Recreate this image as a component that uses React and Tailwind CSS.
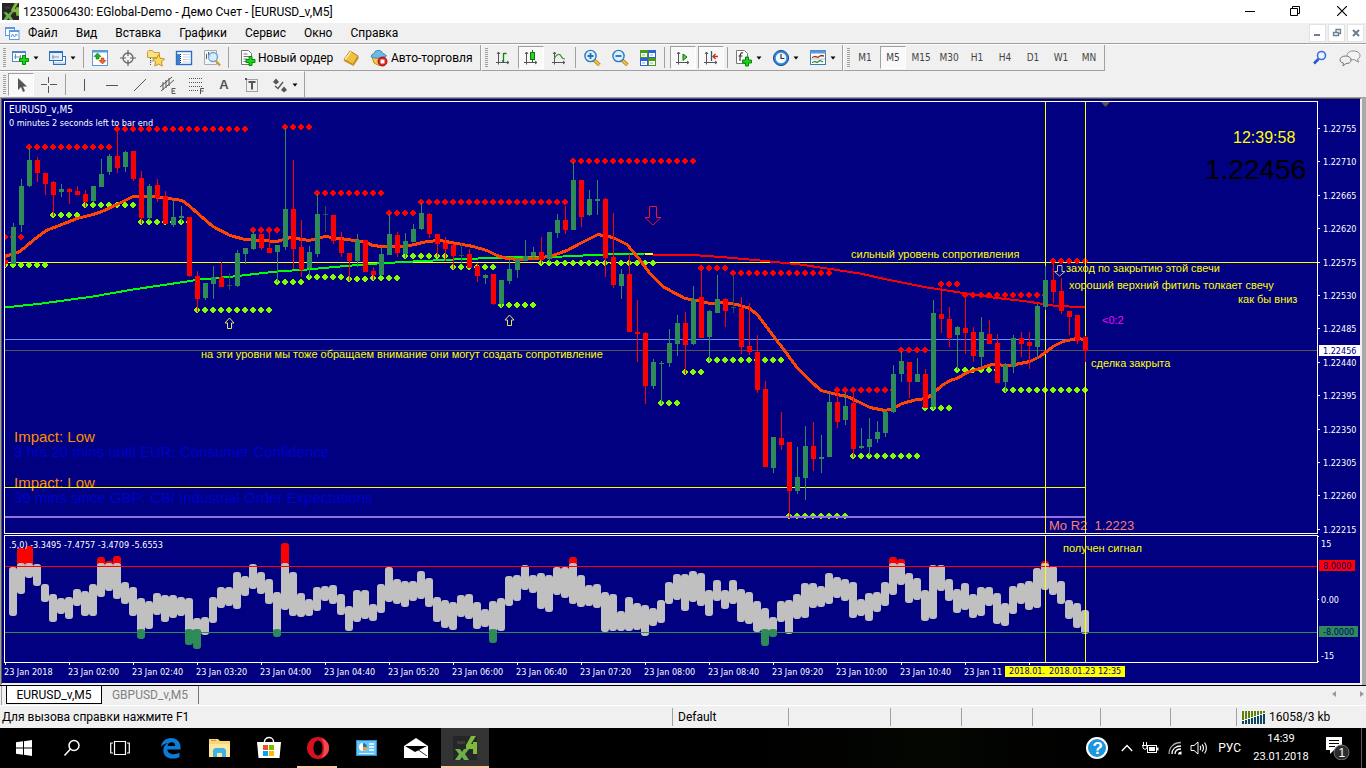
import React from "react";

const UI = "font-['Roboto','Noto_Sans',sans-serif]";
const TAHOMA = "font-['DejaVu_Sans_Condensed','DejaVu_Sans',sans-serif]";

/* high, body top, body bottom, low; one entry every 8px */
const CANDLES = [
  [5, "r", 254, 260, 264, 267], [13, "g", 223, 227, 264, 264], [21, "g", 179, 186, 225, 232], [29, "g", 148, 160, 186, 187],
  [37, "r", 157, 160, 173, 182], [45, "r", 173, 173, 184, 195], [53, "r", 181, 182, 195, 216], [61, "g", 184, 189, 192, 197],
  [69, "r", 188, 189, 192, 204], [77, "r", 186, 191, 195, 195], [85, "r", 190, 194, 202, 207], [93, "g", 186, 186, 201, 202],
  [101, "g", 159, 174, 187, 187], [109, "g", 154, 156, 172, 175], [117, "r", 130, 156, 168, 173], [125, "g", 151, 152, 167, 172],
  [133, "r", 151, 151, 179, 181], [141, "r", 171, 178, 218, 224], [149, "g", 184, 186, 218, 221], [157, "r", 179, 185, 198, 202],
  [165, "r", 191, 196, 224, 224], [173, "g", 200, 217, 225, 227], [181, "g", 206, 216, 218, 223], [189, "r", 217, 217, 276, 277],
  [197, "r", 271, 276, 299, 312], [205, "g", 283, 283, 298, 300], [213, "g", 266, 277, 284, 299], [221, "r", 262, 277, 287, 287],
  [229, "d", 273, 285, 286, 290], [237, "g", 250, 253, 286, 287], [245, "g", 248, 248, 254, 264], [253, "g", 231, 234, 249, 250],
  [261, "r", 234, 234, 248, 250], [269, "r", 232, 248, 253, 253], [277, "g", 245, 245, 252, 282], [285, "g", 128, 209, 247, 250],
  [293, "r", 160, 209, 249, 269], [301, "r", 220, 247, 270, 277], [309, "g", 246, 252, 268, 277], [317, "g", 194, 214, 254, 257],
  [325, "d", 206, 214, 215, 232], [333, "r", 215, 215, 241, 244], [341, "r", 232, 240, 253, 257], [349, "r", 253, 253, 261, 281],
  [357, "g", 234, 240, 261, 267], [365, "r", 240, 240, 272, 272], [373, "r", 267, 271, 275, 280], [381, "g", 248, 254, 275, 276],
  [389, "g", 214, 234, 255, 255], [397, "r", 232, 235, 253, 257], [405, "g", 233, 241, 254, 258], [413, "g", 224, 229, 242, 242],
  [421, "g", 203, 213, 229, 230], [429, "r", 213, 214, 234, 238], [437, "r", 234, 234, 244, 257], [445, "r", 237, 243, 249, 261],
  [453, "r", 244, 245, 256, 269], [461, "d", 244, 255, 256, 264], [469, "r", 249, 254, 268, 268], [477, "r", 263, 266, 276, 282],
  [485, "g", 274, 275, 278, 284], [493, "r", 274, 274, 304, 305], [501, "g", 280, 280, 304, 307], [509, "g", 260, 269, 281, 284],
  [517, "g", 259, 259, 270, 278], [525, "g", 240, 256, 261, 261], [533, "g", 247, 252, 256, 259], [541, "r", 237, 252, 260, 264],
  [549, "g", 232, 232, 259, 262], [557, "g", 214, 220, 233, 238], [565, "r", 206, 220, 230, 234], [573, "g", 162, 180, 230, 230],
  [581, "r", 180, 180, 217, 227], [589, "g", 190, 199, 215, 216], [597, "g", 180, 199, 201, 215], [605, "r", 198, 199, 258, 277],
  [613, "r", 213, 257, 285, 288], [621, "g", 269, 274, 286, 299], [629, "r", 254, 274, 332, 332], [637, "r", 300, 332, 334, 362],
  [645, "r", 332, 333, 386, 404], [653, "g", 359, 362, 386, 389], [661, "g", 361, 363, 364, 404], [669, "g", 329, 343, 363, 367],
  [677, "g", 315, 323, 344, 356], [685, "r", 312, 323, 345, 374], [693, "g", 286, 299, 344, 345], [701, "r", 270, 297, 338, 338],
  [709, "g", 310, 311, 337, 361], [717, "g", 275, 299, 313, 313], [725, "r", 298, 299, 311, 327], [733, "d", 275, 307, 308, 313],
  [741, "r", 297, 308, 347, 354], [749, "r", 303, 346, 352, 355], [757, "r", 335, 352, 390, 393], [765, "r", 381, 389, 467, 467],
  [773, "g", 437, 437, 468, 473], [781, "r", 412, 438, 445, 450], [789, "r", 442, 442, 491, 518], [797, "g", 447, 477, 491, 494],
  [805, "g", 426, 446, 478, 500], [813, "r", 422, 446, 459, 471], [821, "g", 435, 457, 459, 473], [829, "g", 392, 402, 457, 457],
  [837, "r", 391, 402, 422, 428], [845, "g", 392, 406, 420, 425], [853, "r", 391, 403, 449, 457], [861, "g", 428, 446, 448, 449],
  [869, "g", 418, 439, 447, 456], [877, "g", 421, 432, 439, 443], [885, "g", 409, 412, 433, 437], [893, "g", 365, 374, 412, 413],
  [901, "g", 351, 361, 374, 382], [909, "r", 362, 362, 382, 398], [917, "g", 358, 374, 382, 382], [925, "r", 369, 374, 408, 408],
  [933, "g", 300, 313, 407, 409], [941, "r", 285, 314, 319, 333], [949, "r", 307, 319, 338, 347], [957, "g", 326, 327, 335, 370],
  [965, "r", 296, 328, 333, 354], [973, "r", 327, 332, 356, 362], [981, "g", 317, 332, 357, 367], [989, "r", 320, 334, 344, 344],
  [997, "r", 334, 343, 383, 383], [1005, "g", 363, 365, 382, 392], [1013, "g", 335, 338, 367, 373], [1021, "r", 332, 338, 344, 357],
  [1029, "r", 332, 342, 346, 369], [1037, "g", 304, 306, 347, 359], [1045, "g", 266, 280, 307, 310], [1053, "r", 261, 280, 292, 303],
  [1061, "r", 278, 291, 311, 314], [1069, "r", 311, 311, 317, 335], [1077, "r", 315, 315, 341, 344], [1085, "r", 336, 337, 351, 362],
];
const CANDLE_COLOR = { r: "#ff0000", g: "#2e8b57", d: "#2f4f4f" };

const RED_DOTS = [
  [5, 21, 237], [29, 109, 147], [117, 245, 129], [253, 277, 230], [285, 309, 127], [317, 381, 193], [389, 413, 213], [421, 565, 202],
  [573, 693, 161], [701, 725, 268], [733, 829, 273], [837, 893, 390], [901, 925, 350], [941, 957, 284], [965, 1045, 295], [1053, 1085, 261],
];
const GREEN_DOTS = [
  [5, 45, 265], [53, 77, 215], [85, 133, 205], [141, 189, 222], [197, 269, 310], [277, 301, 282], [309, 341, 277], [349, 365, 279],
  [373, 397, 278], [405, 445, 256], [453, 493, 267], [501, 533, 305], [541, 653, 263], [661, 677, 403], [685, 701, 372], [709, 781, 360],
  [789, 845, 516], [853, 917, 456], [925, 949, 408], [957, 997, 370], [1005, 1085, 390],
];

const FAST_MA =
  "5,256 20,251 33,240 46,230 62,224 77,218 93,214 102,211 117,204 133,196 150,196 162,197 182,200 189,205 200,215 213,226 230,235 245,239 263,240 277,241 290,237 309,240 325,236 340,238 347,239 363,241 373,245 382,246 397,246 410,245 427,241 440,240 457,243 473,246 487,250 497,255 507,258 520,259 537,258 553,255 567,250 580,243 598,234 613,237 627,244 638,257 650,273 663,286 670,290 685,298 697,300 710,303 720,302 737,304 750,308 758,315 773,335 783,348 797,367 810,380 821,390 837,394 847,396 860,402 870,407 885,410 893,408 902,403 917,399 927,398 933,393 942,385 950,380 957,378 967,372 983,367 992,364 1010,365 1030,361 1040,356 1053,346 1063,341 1077,338 1085,339";
const SLOW_UP =
  "5,307 42,303 93,296 133,289 167,284 200,279 233,276 277,271 307,269 340,266 377,263 413,261 453,259 503,257 563,256 603,254 645,253";
const SLOW_DOWN =
  "653,254 687,254 727,257 760,260 800,264 827,268 860,273 887,279 927,287 960,292 993,297 1027,301 1053,305 1085,307";

/* top and bottom of each oscillator bar, one every 8px from x=13 */
const BARS = [
  [567, 616], [548, 594], [546, 578], [564, 586], [584, 602], [594, 622], [598, 614], [597, 619], [589, 606], [591, 616], [584, 616],
  [557, 597], [561, 591], [556, 599], [582, 604], [587, 616], [598, 639], [601, 629], [593, 615], [595, 622], [595, 618], [597, 616],
  [598, 645], [618, 649], [617, 635], [597, 623], [587, 608], [587, 606], [572, 609], [576, 596], [564, 589], [572, 594], [579, 604],
  [592, 637], [543, 610], [572, 616], [593, 617], [599, 616], [587, 611], [586, 601], [585, 604], [594, 615], [606, 631], [590, 622],
  [590, 619], [604, 621], [584, 613], [567, 602], [579, 604], [581, 607], [581, 601], [571, 599], [578, 607], [597, 622], [600, 628],
  [602, 630], [595, 617], [594, 619], [602, 629], [609, 627], [601, 643], [598, 631], [576, 606], [575, 601], [565, 590], [575, 593],
  [573, 609], [575, 612], [567, 595], [567, 598], [557, 604], [575, 607], [585, 606], [584, 608], [592, 632], [594, 631], [611, 631],
  [597, 631], [603, 630], [605, 636], [608, 626], [600, 623], [582, 604], [574, 600], [574, 611], [571, 602], [573, 606], [590, 616],
  [580, 601], [590, 609], [580, 604], [589, 622], [592, 624], [601, 632], [608, 646], [617, 637], [601, 622], [600, 634], [594, 619],
  [583, 618], [583, 608], [586, 607], [573, 604], [577, 598], [579, 601], [582, 618], [599, 616], [593, 621], [592, 612], [582, 606],
  [557, 595], [559, 585], [573, 603], [578, 600], [590, 621], [565, 619], [565, 591], [579, 601], [589, 613], [583, 610], [594, 618],
  [587, 616], [587, 606], [593, 624], [603, 626], [586, 614], [583, 604], [581, 610], [568, 608], [561, 590], [566, 595], [581, 604],
  [600, 619], [603, 628], [610, 634],
];

const PRICES = ["1.22755", "1.22710", "1.22665", "1.22620", "1.22575", "1.22530", "1.22485", "1.22440", "1.22395", "1.22350", "1.22305", "1.22260", "1.22215"];
const TIMES = ["2018", "02:00", "02:40", "03:20", "04:00", "04:40", "05:20", "06:00", "06:40", "07:20", "08:00", "08:40", "09:20", "10:00", "10:40", "11"];

function Dots({ rows, color }) {
  return rows.flatMap(([a, b, y]) => {
    const out = [];
    for (let x = a; x <= b; x += 8)
      out.push(
        <path
          key={x + "-" + y}
          d={`M${x - 1} ${y - 3}h2v1h1v1h1v2h-1v1h-1v1h-2v-1h-1v-1h-1v-2h1v-1h1z`}
          fill={color}
          shapeRendering="crispEdges"
        />
      );
    return out;
  });
}

function Note({ x, y, children, color = "#ffff00", size = 11 }) {
  return (
    <text x={x} y={y} fill={color} fontSize={size} fontFamily="Liberation Sans, Arial, sans-serif">
      {children}
    </text>
  );
}

function PricePlot() {
  return (
    <svg className="block h-full w-full" role="img" aria-label="EURUSD_v,M5">
      <g transform="translate(-5 -102)">
        <g shapeRendering="crispEdges">
          <rect x="5" y="262" width="100%" height="1" fill="#ffff00" />
          <rect x="5" y="339" width="1080" height="1" fill="#6495ed" />
          <rect x="5" y="350" width="100%" height="1" fill="#555555" />
        </g>
        <Note x={14} y={442} size={15} color="#ff8c00">Impact: Low</Note>
        <Note x={14} y={457} size={15} color="#0000cd">3 hrs 20 mins until EUR: Consumer Confidence</Note>
        <Note x={14} y={488} size={15} color="#ff8c00">Impact: Low</Note>
        <Note x={14} y={503} size={15} color="#0000cd">39 mins since GBP: CBI Industrial Order Expectations</Note>
        <Note x={1233} y={143} size={16}>12:39:58</Note>
        <Note x={1205} y={179} size={28} color="#000000">1.22456</Note>
        <Note x={1049} y={530} size={13} color="#fa8072">{"Mo R2\u00a0 1.2223"}</Note>
        <Dots rows={RED_DOTS} color="#ff0000" />
        <Dots rows={GREEN_DOTS} color="#7fff00" />
        <g shapeRendering="crispEdges">
          <rect x="5" y="487" width="1080" height="1" fill="#ffff00" />
          <rect x="5" y="516" width="1080" height="2" fill="#9370db" />
          <rect x="1045" y="102" width="1" height="100%" fill="#ffff00" />
          <rect x="1085" y="102" width="1" height="100%" fill="#ffff00" />
          <g fill="none" transform="translate(0 0.5)">
            <polyline points={SLOW_UP} stroke="#00ff00" strokeWidth="2" />
            <polyline points="645,253 653,253" stroke="#ffff00" strokeWidth="2" />
            <polyline points={SLOW_DOWN} stroke="#ff0000" strokeWidth="2" />
            <polyline points={FAST_MA} stroke="#ff4500" strokeWidth="3" />
          </g>
          {CANDLES.map(([x, c, hi, top, bot, lo]) => (
            <g key={x} fill={CANDLE_COLOR[c]}>
              <rect x={x} y={hi} width="1" height={lo - hi} />
              <rect x={x - 2} y={top} width="5" height={Math.max(1, bot - top)} />
            </g>
          ))}
        </g>
        <path d="M1101 102h9l-4.500 5z" fill="#555" />
        <g fill="none">
          <path d="M229.500 318l4.500 5h-2.500v5.500h-4v-5.500H225z" stroke="#e6e65a" />
          <path d="M509.500 315l4.500 5h-2.500v5.500h-4v-5.500H505z" stroke="#e6e65a" />
          <path d="M649.500 206.500h7v11h4.500l-8 7.500l-8-7.500h4.500z" stroke="#ee1133" />
          <path d="M1057.500 265.500h4.500v6h3l-5.500 4.500l-5-4.500h3z" stroke="#c8c08c" />
        </g>
        <Note x={851} y={258}>сильный уровень сопротивления</Note>
        <Note x={1066} y={272}>заход по закрытию этой свечи</Note>
        <Note x={1069} y={289}>хороший верхний фитиль толкает свечу</Note>
        <Note x={1238} y={303}>как бы вниз</Note>
        <Note x={1091} y={367}>сделка закрыта</Note>
        <Note x={201} y={358}>на эти уровни мы тоже обращаем внимание они могут создать сопротивление</Note>
        <Note x={1102} y={324} color="#ff00ff">&lt;0:2</Note>
        <g fill="#ffffff" className={TAHOMA}>
          <text x="9" y="113" fontSize="10">EURUSD_v,M5</text>
          <text x="9" y="126" fontSize="9">0 minutes 2 seconds left to bar end</text>
        </g>
      </g>
    </svg>
  );
}

function Oscillator() {
  return (
    <svg className="block h-full w-full" role="img" aria-label="Oscillator">
      <g transform="translate(-5 -536)">
        {BARS.map(([t, b], i) => {
          const x = 9 + i * 8;
          const over = t <= 561;
          const under = b >= 637;
          const top = over ? 563 : t;
          const bottom = under ? 632 : b;
          return (
            <g key={i}>
              {over && <rect x={x} y={t} width="8" height={576 - t} rx="3" fill="#ff0000" />}
              <rect x={x} y={top} width="8" height={bottom - top} rx="3" fill="#c0c0c0" />
              {under && <rect x={x} y="629" width="8" height={b - 629} rx="3" fill="#2e8b57" />}
            </g>
          );
        })}
        <g shapeRendering="crispEdges">
          <rect x="5" y="566" width="100%" height="1" fill="#ff0000" />
          <rect x="5" y="632" width="100%" height="1" fill="#2e8b57" />
          <rect x="1045" y="536" width="1" height="100%" fill="#ffff00" />
          <rect x="1085" y="536" width="1" height="100%" fill="#ffff00" />
        </g>
        <text x="9" y="548" fill="#fff" className={TAHOMA} fontSize="9">.5,0) -3.3495 -7.4757 -3.4709 -5.6553</text>
        <Note x={1063} y={552}>получен сигнал</Note>
      </g>
    </svg>
  );
}

function PriceAxis() {
  return (
    <svg className={`block h-full w-[42px] shrink-0 ${TAHOMA}`} fontSize="9" fill="#fff">
      <g transform="translate(-1318 -101)">
        {PRICES.map((p, i) => {
          const y = Math.round(128 + i * 33.4);
          return (
            <g key={p}>
              <rect x="1318" y={y} width="2" height="1" />
              <text x="1323" y={y + 4}>{p}</text>
            </g>
          );
        })}
        <rect x="1319" y="345" width="41" height="11" />
        <text x="1323" y="354" fill="#000080">1.22456</text>
      </g>
    </svg>
  );
}

function OscAxis() {
  return (
    <svg className={`block h-full w-[42px] shrink-0 ${TAHOMA}`} fontSize="9" fill="#fff">
      <g transform="translate(-1318 -535)">
        <rect x="1318" y="536" width="1" height="1" />
        <rect x="1318" y="599" width="1" height="1" />
        <rect x="1318" y="661" width="1" height="1" />
        <text x="1321" y="547">15</text>
        <text x="1321" y="603">0.00</text>
        <text x="1321" y="659">-15</text>
        <rect x="1319" y="560" width="36" height="11" fill="#ff0000" />
        <text x="1323" y="569" fill="#000080">8.0000</text>
        <rect x="1319" y="626" width="39" height="11" fill="#2e8b57" />
        <text x="1323" y="635" fill="#000080">-8.0000</text>
      </g>
    </svg>
  );
}

/* ---------- toolbar icons ---------- */
const Svg = ({ w = 18, h = 18, children, ...p }) => (
  <svg width={w} height={h} viewBox={`0 0 ${w} ${h}`} fill="none" className="block shrink-0" aria-hidden="true" {...p}>
    {children}
  </svg>
);
const Plus = ({ x, y }) => (
  <path transform={`translate(${x} ${y})`} d="M3.500 .5h3v3h3v3h-3v3h-3v-3h-3v-3h3z" fill="#19d419" stroke="#078a07" />
);
const Axes = ({ children }) => (
  <Svg>
    <path d="M4.500 3v12.500M2 13.500h13M3 5l1.500-2L6 5M13 12l2 1.500L13 15" stroke="#555" />
    {children}
  </Svg>
);
const NewChart = () => (
  <Svg><rect x=".5" y="2.500" width="13" height="10" fill="#fff" stroke="#4a86c8" /><path d="M1 3.500h12" stroke="#4a86c8" /><path d="M3.500 5v5M2 8h7M8.500 6v3" stroke="#6a8db0" /><Plus x={7} y={6} /></Svg>
);
const Profiles = () => (
  <Svg><rect x="4.500" y="7.500" width="12" height="8" fill="#fff" stroke="#2f6fc0" /><path d="M5 14h11" stroke="#8ab4e8" /><rect x=".5" y="2.500" width="13" height="9" fill="#e4effb" stroke="#2f6fc0" /><path d="M1 3.500h12" stroke="#2f6fc0" /><path d="M3 8h7M4 6v4" stroke="#8099b3" /></Svg>
);
const Market = () => (
  <Svg><rect x="1.500" y="1.500" width="15" height="15" fill="#fff" stroke="#5a9bd8" /><path d="M1 2.500h16" stroke="#5a9bd8" strokeWidth="2" /><path d="M6.500 4L10 7.500H8V10H5V7.500H3z" fill="#21b021" stroke="#0c7a0c" strokeWidth=".6" /><path d="M11.500 15L8 11.500h2V9h3v2.500h2z" fill="#f0642a" stroke="#b83c10" strokeWidth=".6" /></Svg>
);
const Target = () => (
  <Svg><circle cx="9" cy="9" r="5" stroke="#666" strokeWidth="1.300" /><path d="M9 1v6M9 11v6M1 9h6M11 9h6" stroke="#666" strokeWidth="1.200" /></Svg>
);
const FolderStar = () => (
  <Svg><path d="M.5 2.500l1-1h4l1.500 2h5.500v5h-12z" fill="#fbe08a" stroke="#c9a13a" /><path d="M3.500 9v7M3.500 12h4" stroke="#555" strokeDasharray="1 1" /><path d="M11.500 5.500l1.900 3.800 4.100.6-3 3 .8 4.200-3.800-2-3.700 2 .7-4.200-3-3 4.200-.6z" fill="#ffd757" stroke="#b98a18" strokeWidth=".9" /></Svg>
);
const ListIcon = () => (
  <Svg><rect x="1.500" y="2.500" width="15" height="13" fill="#fff" stroke="#2a6fc4" strokeWidth="1.400" /><path d="M2 5h3v10H2z" fill="#3a7fd4" /><path d="M8 5.500h7M8 8h7M8 10.500h7M8 13h7" stroke="#c8d4e4" /><path d="M5.500 5v9" stroke="#222" strokeDasharray="1 1" /></Svg>
);
const Tester = () => (
  <Svg><path d="M1.500 1.500h12v14h-12z" fill="#f4f4f4" stroke="#aaa" /><path d="M3.500 5v5M5.500 3v4M7.500 5v3" stroke="#467" /><circle cx="10" cy="8" r="4.500" fill="#d7ecfb" fillOpacity=".85" stroke="#6aa4d4" strokeWidth="1.300" /><path d="M13 12l4 4.500" stroke="#d79b2a" strokeWidth="2.400" /></Svg>
);
const Order = () => (
  <Svg w={16}><path d="M1.500 1.500h7l3 3v11h-10z" fill="#fff" stroke="#777" /><path d="M3.500 5h4M3.500 7.500h6M3.500 10h4M3.500 12.500h3" stroke="#777" /><Plus x={5.500} y={7} /></Svg>
);
const Book = () => (
  <Svg><path d="M2 10.500L8 2l8 5-5 8.500z" fill="#f3bf3d" stroke="#b07a14" /><path d="M2 10.500l9 5 5-8.500.8 2L11.500 17 2 12z" fill="#c98f25" /><path d="M3 10.500l6-8" stroke="#fff0b0" strokeWidth="1.400" /></Svg>
);
const Auto = () => (
  <Svg><path d="M2 8h13l-1.500 6.500L9 16.500 4 14z" fill="#f6c94a" stroke="#c08d1c" /><path d="M1 7.500C2 4 5 5 5 2.500 7 1 11 1 12 3c0 2 4 2 4.500 4C12 9.500 4 10 1 7.500z" fill="#6fb9e6" stroke="#2f83bd" strokeWidth=".9" /><circle cx="12.500" cy="12.500" r="4.500" fill="#d22" stroke="#a11" /><rect x="10.500" y="10.500" width="4" height="4" fill="#fff" /></Svg>
);
const Zoom = ({ plus }) => (
  <Svg><path d="M11 11l5.500 5" stroke="#a97a12" strokeWidth="3.600" /><path d="M11 11l5.500 5" stroke="#f0c63a" strokeWidth="2" /><circle cx="7.500" cy="7" r="5.600" fill="#d9effc" stroke="#2f78bd" strokeWidth="1.400" /><path d={plus ? "M4.500 7h6M7.500 4v6" : "M4.500 7h6"} stroke="#2f6ea6" strokeWidth="1.800" /></Svg>
);
const Tile = () => (
  <Svg><rect x="1" y="1" width="8" height="8" fill="#4a9a18" /><rect x="9" y="1" width="8" height="8" fill="#2c64d8" /><rect x="1" y="9" width="8" height="8" fill="#2c64d8" /><rect x="9" y="9" width="8" height="8" fill="#4a9a18" /><path d="M2 4h6v4H2zM10 4h6v4h-6zM2 12h6v4H2zM10 12h6v4h-6z" fill="#fff" /><path d="M3 6h3M11 6h3M3 14h3M11 14h3" stroke="#88a8d8" /></Svg>
);
const IndAdd = () => (
  <Svg><path d="M1.500 1.500h8l3 3v10h-11z" fill="#fff" stroke="#777" /><path d="M8 4c-3-1-3 2-3 8M3.500 7h4" stroke="#333" strokeWidth="1.200" /><Plus x={7} y={7.500} /></Svg>
);
const Clock = () => (
  <Svg><circle cx="9" cy="9" r="7.600" fill="#2f86e0" stroke="#15508f" /><circle cx="9" cy="9" r="5.300" fill="#f3f8fd" /><path d="M9 5v4.500h3.500" stroke="#333" strokeWidth="1.200" /></Svg>
);
const Template = () => (
  <Svg><rect x="1.500" y="1.500" width="15" height="14" fill="#fff" stroke="#3c78b8" /><path d="M1 3h16" stroke="#5a98d8" strokeWidth="3" /><path d="M3 8.500l3-1 3 .8 3-1.800 3 .5" stroke="#a03018" strokeWidth="1.300" /><path d="M2 10h14" stroke="#bbb" /><path d="M3 13.500l3-1 2 1 3-2 3 1.500" stroke="#2e8b2e" strokeWidth="1.300" /></Svg>
);
const Caret = () => <Svg w={6} h={4}><path d="M.5 .5h5L3 3.500z" fill="#000" /></Svg>;

function Tool({ label, pressed, children }) {
  return (
    <button
      type="button"
      aria-label={label}
      aria-pressed={pressed ? "true" : undefined}
      className={`mr-[2px] flex h-[23px] w-[26px] shrink-0 items-center justify-center border ${pressed ? "border-t-[#a0a0a0] border-r-white border-b-white border-l-[#a0a0a0] bg-[#f9f9f9]" : "border-transparent"}`}
    >
      {children}
    </button>
  );
}
function DropTool({ label, children }) {
  return (
    <button type="button" aria-label={label} className="flex h-[23px] w-[37px] shrink-0 items-center gap-[3px] pl-[4px]">
      {children}
      <Caret />
    </button>
  );
}
const Grip = () => (
  <div className="flex w-2 shrink-0 justify-center">
    <div className="h-[20px] w-[3px] bg-[repeating-linear-gradient(to_bottom,#a0a0a0_0_1px,#f0f0f0_1px_2px)]" />
  </div>
);
const Sep = ({ className }) => (
  <div className={`flex h-[21px] shrink-0 pl-px ${className}`}><div className="w-px bg-[#a0a0a0]" /></div>
);

function Toolbars() {
  return (
    <>
      <div className="flex h-[27px] shrink-0 border-t border-white">
        <div className="flex items-center border-r border-b border-[#a0a0a0]">
          <Grip />
          <DropTool label="Новый график"><NewChart /></DropTool>
          <DropTool label="Профили"><Profiles /></DropTool>
          <Sep className="w-[5px]" />
          <Tool label="Обзор рынка"><Market /></Tool>
          <Tool label="Окно данных"><Target /></Tool>
          <Tool label="Навигатор"><FolderStar /></Tool>
          <Tool label="Терминал"><ListIcon /></Tool>
          <Tool label="Тестер стратегий"><Tester /></Tool>
          <Sep className="w-[9px]" />
          <button type="button" className="flex w-[102px] items-center gap-[2px] pl-1 text-[12px] whitespace-nowrap"><Order />Новый ордер</button>
          <Tool label="MetaEditor"><Book /></Tool>
          <button type="button" className="flex w-[114px] items-center gap-[3px] pl-1 text-[12px] whitespace-nowrap"><Auto />Авто-торговля</button>
        </div>
        <div className="flex items-center border-r border-b border-l border-[#a0a0a0] border-l-white">
          <Grip />
          <Tool label="Бары"><Axes><path d="M9.500 4v9M9.500 12H8M9.500 4.500h3" stroke="#0a8a0a" strokeWidth="1.300" /></Axes></Tool>
          <Tool label="Свечи" pressed><Axes><path d="M10.500 1v12" stroke="#0a7a0a" /><rect x="8.500" y="3.500" width="4" height="7" fill="#2fd02f" stroke="#0a7a0a" /></Axes></Tool>
          <Tool label="Линия"><Axes><path d="M4 10c3-6 6-5 7-3s2 3 4 3" stroke="#2c9a2c" strokeWidth="1.200" /></Axes></Tool>
          <Sep className="w-[5px]" />
          <Tool label="Увеличить"><Zoom plus /></Tool>
          <Tool label="Уменьшить"><Zoom /></Tool>
          <Tool label="Расположить окна"><Tile /></Tool>
          <Sep className="w-[7px]" />
          <Tool label="Автопрокрутка" pressed><Axes><path d="M9 5l4 3-4 3.500z" fill="#4fd04f" stroke="#0a7a0a" /></Axes></Tool>
          <Tool label="Сдвиг графика" pressed><Axes><path d="M9.500 2v10" stroke="#2a5a8a" strokeWidth="1.300" /><path d="M11 7.500h5M13.500 5L11 7.500l2.500 2.500" stroke="#c03a10" strokeWidth="1.400" /></Axes></Tool>
          <Sep className="w-[5px]" />
          <DropTool label="Индикаторы"><IndAdd /></DropTool>
          <DropTool label="Периоды"><Clock /></DropTool>
          <DropTool label="Шаблоны"><Template /></DropTool>
        </div>
        <div className={`flex items-center border-r border-b border-l border-[#a0a0a0] border-l-white text-[10px] text-[#444] ${TAHOMA}`}>
          <Grip />
          {["M1", "M5", "M15", "M30", "H1", "H4", "D1", "W1", "MN"].map((t) => (
            <Tool key={t} label={t} pressed={t === "M5"}>{t}</Tool>
          ))}
        </div>
        <div className="ml-auto flex items-center gap-3 pr-[5px]">
          <button type="button" aria-label="Поиск">
            <Svg w={14} h={16}><circle cx="8.500" cy="5.500" r="4" stroke="#3a70e0" strokeWidth="1.600" fill="#eef4ff" /><path d="M5.500 9L1 13.500" stroke="#2458d0" strokeWidth="2.600" /></Svg>
          </button>
          <button type="button" aria-label="Сообщения">
            <Svg w={22} h={18}><path d="M14 2c4 0 7 1.500 7 4.500 0 2-1 3-2.500 3.700l1 3-4-2.500C10 11 8 9 8 6.500 8 4 10.500 2 14 2z" fill="#f4f4f4" stroke="#8a8a8a" /><path d="M6.500 7c3.500 0 5.500 1.500 5.500 4s-2 3.600-5 3.600L4 17l.4-3C2 13.500 1 12.500 1 11c0-2.500 2.500-4 5.500-4z" fill="#eee" stroke="#777" /></Svg>
          </button>
        </div>
      </div>
      <div className="flex h-[26px] shrink-0">
        <div className="flex items-center border-t border-r border-t-white border-r-[#a0a0a0] text-[#555]">
          <Grip />
          <Tool label="Курсор" pressed><Svg><path d="M6 2v12l3-3 2 5 2-1-2-4.500h4z" fill="#555" /></Svg></Tool>
          <Tool label="Перекрестие"><Svg><path d="M8.500 1v6M8.500 10v7M1 8.500h6M10 8.500h7" stroke="#555" /></Svg></Tool>
          <Sep className="w-[7px]" />
          <Tool label="Вертикальная линия"><Svg><path d="M9.500 3v12" stroke="#555" /></Svg></Tool>
          <Tool label="Горизонтальная линия"><Svg><path d="M3 9.500h12" stroke="#555" /></Svg></Tool>
          <Tool label="Трендовая линия"><Svg><path d="M3 15L15 3" stroke="#555" /></Svg></Tool>
          <Tool label="Канал">
            <Svg><path d="M1 11L13 1M2 15L15 4M4 6v8M7 4v8M10 2v8" stroke="#555" /><path d="M16.500 12.500h-3.500v5h3.500M13 15h3" stroke="#555" /></Svg>
          </Tool>
          <Tool label="Фибоначчи">
            <Svg><path d="M2 2.500h14M2 6.500h14M2 10.500h14M2 14.500h9" stroke="#555" strokeDasharray="1 1" /><path d="M17 12.500h-3.500v5.500M13.500 15h3" stroke="#555" /></Svg>
          </Tool>
          <Tool label="Текст"><span className="font-['Liberation_Sans',sans-serif] text-[13px] font-bold">A</span></Tool>
          <Tool label="Текстовая метка">
            <Svg><rect x="3.500" y="3.500" width="11" height="12" stroke="#555" strokeDasharray="1 1" /><rect x="2" y="2" width="2" height="2" fill="#555" /><path d="M5.500 6h7M9 6v7.500" stroke="#555" strokeWidth="2" /></Svg>
          </Tool>
          <DropTool label="Стрелки">
            <Svg><path d="M5 2.500L8 6 5 8.500 2 6zM13 10.500l3 3.500-3 2.500-3-2.500z" fill="#555" /><path d="M4 10l3 2.500L12 6" stroke="#555" strokeWidth="1.300" /></Svg>
          </DropTool>
        </div>
      </div>
    </>
  );
}

/* the green "4" and "x" badge */
const Badge = ({ size }) => (
  <svg width={size} height={size} viewBox="0 0 24 24" className="block shrink-0" aria-hidden="true">
    <rect width="24" height="24" fill="#262626" />
    <path d="M4 5h8v3H4z" fill="#3c3c3c" />
    <path d="M18 0h5l-5 8h2V6h4v12h-4v-5h-7v-4z" fill="#7fb93f" />
    <path d="M2 13h5l2 3 2-3h5l-4 5 4 6h-5l-2-3-2 3H2l4-6z" fill="#6bb04a" />
  </svg>
);

function TaskSlot({ label, className = "w-[49px]", children }) {
  return (
    <button type="button" aria-label={label} className={`flex h-full shrink-0 items-center justify-center ${className}`}>
      {children}
    </button>
  );
}

function Taskbar() {
  return (
    <footer className="flex h-10 shrink-0 bg-black bg-[linear-gradient(to_right,#000_56%,#040702_68%,#000_80%)] text-white">
      <TaskSlot label="Пуск" className="w-12"><Svg w={16} h={16}><path d="M0 2.300L7 1.300v6.200H0zM8 1.200L16 0v7.500H8zM0 8.500h7v6.200l-7-1zM8 8.500h8V16l-8-1.200z" fill="#fff" /></Svg></TaskSlot>
      <TaskSlot label="Поиск" className="w-12"><Svg w={18} h={18}><circle cx="11" cy="6.500" r="5" stroke="#fff" strokeWidth="1.500" /><path d="M7.500 10L1.500 16.500" stroke="#fff" strokeWidth="1.500" /></Svg></TaskSlot>
      <TaskSlot label="Представление задач" className="w-[51px] pr-1"><Svg w={20} h={16}><path d="M4.500 1.500h11v13h-11zM3 3H.7v10H3M17 3h2.300v10H17" stroke="#fff" strokeWidth="1.200" /></Svg></TaskSlot>
      <TaskSlot label="Edge" className="w-12">
        <Svg w={22} h={22}><path d="M1 10C1.500 4.500 5.500 1 11 1c6 0 9.500 4 9.500 9v2.500H7.300c.3 3.200 3 4.700 6.200 4.700 2.300 0 4.300-.6 6-1.600V20c-2 1-4.300 1.600-7 1.600-5.500 0-9.200-3.200-9.200-8.100 0-3.200 1.800-6 4.700-7.400C5 6.500 2.500 7.800 1 10zm6.500-1h7.700c0-2.300-1.300-3.700-3.600-3.700S7.900 6.700 7.500 9z" fill="#0c7cd9" /></Svg>
      </TaskSlot>
      <TaskSlot label="Проводник">
        <Svg w={22} h={18}><path d="M0 0h9l2 2h10v16H0z" fill="#f5d57a" /><path d="M2 1h5v1H2z" fill="#e09b1c" /><path d="M0 5h21v13H0z" fill="#fce59c" /><path d="M4 18v-7l2-2h9l2 2v7h-4v-4H8v4z" fill="#3fb0e8" /></Svg>
      </TaskSlot>
      <TaskSlot label="Магазин">
        <Svg w={24} h={24}><path d="M7.500 7V5.500A4.500 4 0 0 1 16.500 5.500V7" stroke="#fff" strokeWidth="1.400" /><path d="M0 6h24l-1.500 16h-21z" fill="#fff" /><path d="M6 9h5v5H6z" fill="#f25022" /><path d="M12 9h5v5h-5z" fill="#7fba00" /><path d="M6 15h5v5H6z" fill="#00a4ef" /><path d="M12 15h5v5h-5z" fill="#ffb900" /></Svg>
      </TaskSlot>
      <TaskSlot label="Opera" className="relative w-[49px]">
        <Svg w={24} h={24}><path fillRule="evenodd" d="M12 1a11 11 0 1 0 0 22 11 11 0 0 0 0-22zm0 3.500c2.800 0 4.500 3.300 4.500 7.500s-1.700 7.500-4.500 7.500S7.500 16.200 7.500 12 9.200 4.500 12 4.500z" fill="#d8101f" /><path d="M15 2c5 1.500 8 5.500 8 10s-3 8.500-8 10c2-2 3-6 3-10s-1-8-3-10z" fill="#f0494f" /></Svg>
        <span className="absolute bottom-0 left-1 h-[2px] w-10 bg-[#fdc9a4]" />
      </TaskSlot>
      <TaskSlot label="Панель управления">
        <Svg w={22} h={16}><rect x=".5" y=".5" width="20" height="15" fill="#65c3f5" stroke="#2e8fd0" /><circle cx="7" cy="7" r="4" fill="#fff" /><path d="M7 7V3a4 4 0 0 1 4 4z" fill="#1f77c0" /><path d="M7 7h4a4 4 0 0 1-4 4z" fill="#f59a23" /><path d="M13 4h5M13 7h5M13 10h5" stroke="#fff" strokeWidth="1.500" /><path d="M3 13.500h15" stroke="#d8f0ff" /></Svg>
      </TaskSlot>
      <TaskSlot label="Почта">
        <Svg w={24} h={20}><path d="M0 8L12 0l12 8v12H0z" fill="#fff" /><path d="M1 8h22l-12 6z" fill="#000" /><path d="M13 11l10 7" stroke="#000" strokeWidth=".8" /></Svg>
      </TaskSlot>
      <TaskSlot label="MetaTrader" className="relative ml-px w-12 bg-[#333]">
        <Badge size={24} />
        <span className="absolute bottom-0 left-0 h-[2px] w-full bg-[#fdc9a4]" />
      </TaskSlot>
      <div className={`ml-auto flex items-center ${UI}`}>
        <button type="button" aria-label="Справка" className="mr-3">
          <Svg w={24} h={24}><circle cx="12" cy="12" r="10" fill="#1b96dc" stroke="#fff" strokeWidth="2" /><text x="7.500" y="18" fontSize="17" fontWeight="bold" fill="#fff" fontFamily="Liberation Sans">?</text></Svg>
        </button>
        <button type="button" aria-label="Скрытые значки" className="mr-2"><Svg w={12} h={8}><path d="M.8 7L6 1.500 11.200 7" stroke="#fff" strokeWidth="1.400" /></Svg></button>
        <Svg w={18} h={14}><rect x="6.500" y="4.500" width="9" height="7" stroke="#fff" /><path d="M8 6h6v4H8zM16 6.500h1.500v3H16z" fill="#fff" /><path d="M2.500 1v3M5.500 1v3M1 4.500h6M2 5v2l2 1.500L6 7V5" stroke="#fff" /></Svg>
        <span className="w-[9px]" />
        <Svg w={14} h={14}><g stroke="#aaa" strokeWidth="1.300"><path d="M1 13C1 6 6 1.500 13 1.500" /><path d="M4 13c0-5 3.500-8 9-8" stroke="#fff" /><path d="M7 13c0-3 2-5 6-5" stroke="#fff" /></g><path d="M10 13.500a3.500 3 0 0 1 3.500-3v3z" fill="#fff" /></Svg>
        <span className="w-[8px]" />
        <Svg w={18} h={14}><path d="M1 4.500h3L8 1v12L4 9.500H1z" stroke="#fff" /><path d="M10 5c1 1 1 3 0 4M12 3.500c2 2 2 5 0 7M14.500 1.500c2.500 3 2.500 8 0 11" stroke="#fff" strokeWidth="1.100" /></Svg>
        <button type="button" className="ml-[10px] text-[12px]">РУС</button>
        <div className="ml-[12px] flex w-[56px] flex-col items-center text-[11px] leading-[18px]">
          <span>14:39</span>
          <span>23.01.2018</span>
        </div>
        <button type="button" aria-label="Уведомления" className="mr-[10px] ml-[16px]">
          <Svg w={26} h={24}><path d="M1 1h16v13H9l-4 4v-4H1z" fill="#fff" /><path d="M4 4.500h10M4 7.500h10M4 10.500h6" stroke="#000" /><circle cx="16.500" cy="16.500" r="7.500" fill="#2c2c2c" stroke="#777" /><text x="13.500" y="21" fontSize="12" fill="#fff" fontFamily="Liberation Sans">1</text></Svg>
        </button>
        <span className="mr-1 h-full w-px bg-[#555]" />
      </div>
    </footer>
  );
}

export default function App() {
  return (
    <div className={`flex h-screen flex-col overflow-hidden bg-[#f0f0f0] text-[12px] leading-4 text-black ${UI}`}>
      <header className="flex h-[23px] shrink-0 items-center bg-white pl-[2px]">
        <Badge size={17} />
        <h1 className="ml-1 whitespace-nowrap">1235006430: EGlobal-Demo - Демо Счет - [EURUSD_v,M5]</h1>
        <div className="ml-auto flex items-center pb-[2px]">
          <button type="button" aria-label="Свернуть" className="flex w-[45px] justify-center"><Svg w={10} h={10}><path d="M0 5.500h10" stroke="#000" /></Svg></button>
          <button type="button" aria-label="Развернуть" className="flex w-[46px] justify-center"><Svg w={10} h={10}><path d="M.5 2.500h7v7h-7zM2.500 2.500v-2h7v7h-2" stroke="#000" /></Svg></button>
          <button type="button" aria-label="Закрыть" className="flex w-[48px] justify-center"><Svg w={10} h={10}><path d="M0 0l10 10M10 0L0 10" stroke="#000" strokeWidth="1.200" /></Svg></button>
        </div>
      </header>
      <nav className="flex h-[21px] shrink-0 items-center border-b border-[#a0a0a0] pl-[5px]">
        <Svg w={15} h={15}><rect x=".5" y="1.500" width="9" height="8" fill="#fff" stroke="#5a98e0" /><path d="M1 2.500h8" stroke="#5a98e0" /><rect x="4.500" y="4.500" width="9.500" height="9" fill="#fff" stroke="#5a98e0" /><path d="M5 5.500h9" stroke="#5a98e0" /><path d="M6 11l1.500-3 2 3 1.500-3 1.500 2" stroke="#5a98e0" /></Svg>
        <div className="ml-2 flex gap-[18px]">
          {["Файл", "Вид", "Вставка", "Графики", "Сервис", "Окно", "Справка"].map((m) => (
            <button key={m} type="button">{m}</button>
          ))}
        </div>
        <div className="mr-[2px] ml-auto flex gap-[2px]">
          {[["Свернуть окно", "M4 10h6"], ["Восстановить окно", "M4.500 7.500h5v3h-5zM7 7V4.500h4.500v4H10"], ["Закрыть окно", "M5 5l6 6M11 5l-6 6"]].map(([l, d], i) => (
            <button key={l} type="button" aria-label={l} className="flex h-[18px] w-[17px] items-center justify-center border border-[#e3e3e3] bg-white">
              <Svg w={15} h={16}><path d={d} stroke="#6d7f92" strokeWidth={i === 1 ? 1.300 : 2} /></Svg>
            </button>
          ))}
        </div>
      </nav>
      <Toolbars />
      <main className="flex min-h-0 flex-1 border-t border-l border-[#a0a0a0]">
        <div className="flex min-w-0 flex-1 flex-col border-t border-r-2 border-b-2 border-l border-t-[#555] border-r-[#f0f0f0] border-b-[#f0f0f0] border-l-[#555] bg-[#000080] pt-[2px] pl-[2px]">
          <div className="flex min-h-0 flex-1">
            <div className="min-w-0 flex-1 overflow-hidden border border-white"><PricePlot /></div>
            <PriceAxis />
          </div>
          <div className="mt-px flex h-[128px] shrink-0">
            <div className="min-w-0 flex-1 overflow-hidden border border-white"><Oscillator /></div>
            <OscAxis />
          </div>
          <div className={`relative flex h-5 shrink-0 overflow-hidden text-[9px] text-white ${TAHOMA}`}>
            {TIMES.map((t) => (
              <div key={t} className="w-16 shrink-0 whitespace-nowrap">
                <div className="ml-px h-[2px] w-px bg-white" />
                <div className="leading-[14px]">23 Jan {t}</div>
              </div>
            ))}
            <div className="ml-px h-[2px] w-px bg-white" />
            <div className="absolute top-[3px] left-[1001px] flex h-[11px] bg-[#ffff00] pl-1 leading-[11px] whitespace-nowrap text-[#000080]">
              <span className="w-10">2018.01.</span>
              <span className="w-[76px]">2018.01.23 12:35</span>
            </div>
          </div>
        </div>
        <div className="w-1 shrink-0 bg-[#a9a9a9]" />
      </main>
      <div className="flex h-5 shrink-0 items-start border-t border-black">
        <div className="ml-px h-full w-px bg-[#a0a0a0]" />
        <button type="button" className="ml-1 h-[18px] w-[96px] border-r border-b border-l border-black bg-white whitespace-nowrap">EURUSD_v,M5</button>
        <button type="button" className="h-[18px] w-[97px] border-r border-[#777] whitespace-nowrap text-[#808080]">GBPUSD_v,M5</button>
        <div className="ml-auto flex h-full items-center gap-[20px] pb-1">
          <button type="button" aria-label="Влево"><Svg w={8} h={8}><path d="M6 1v6L2 4z" fill="#999" /></Svg></button>
          <button type="button" aria-label="Вправо"><Svg w={8} h={8}><path d="M2 1v6l4-3z" fill="#999" /></Svg></button>
        </div>
      </div>
      <div className="flex h-[23px] shrink-0 items-center border-t border-white">
        <span className="min-w-0 flex-1 pl-[2px] whitespace-nowrap">Для вызова справки нажмите F1</span>
        <span className="flex h-[18px] w-[116px] items-center border-l border-[#a0a0a0] pl-[5px]">Default</span>
        <span className="h-[18px] w-[102px] border-l border-[#a0a0a0]" />
        <span className="h-[18px] w-[71px] border-l border-[#a0a0a0]" />
        <span className="h-[18px] w-[71px] border-l border-[#a0a0a0]" />
        <span className="h-[18px] w-[68px] border-l border-[#a0a0a0]" />
        <span className="h-[18px] w-[70px] border-l border-[#a0a0a0]" />
        <span className="h-[18px] w-[66px] border-l border-[#a0a0a0]" />
        <span className="flex h-[18px] w-[130px] items-center gap-1 border-l border-[#a0a0a0] pl-[5px] whitespace-nowrap">
          <Svg w={23} h={13}>
            {[0, 1, 2, 3, 4, 5, 6, 7].map((i) => (
              <g key={i}><rect x={i * 3} y="0" width="2" height={9 - i} fill="#5f7f0a" /><rect x={i * 3} y={10 - i} width="2" height={3 + i} fill="#0c4262" /></g>
            ))}
          </Svg>
          16058/3 kb
        </span>
      </div>
      <Taskbar />
    </div>
  );
}
